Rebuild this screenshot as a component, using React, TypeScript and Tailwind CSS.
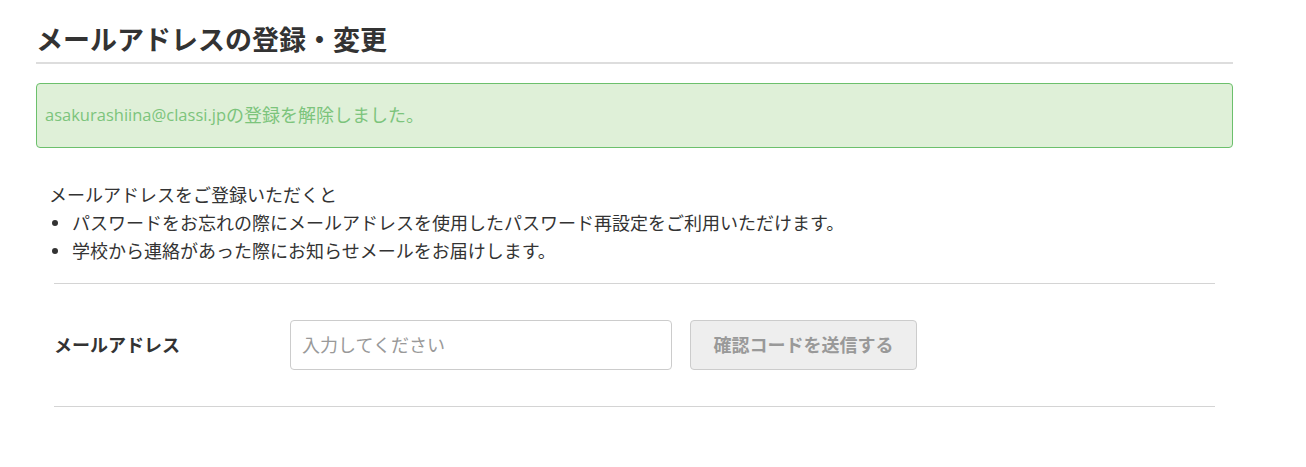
export default function App() {
  const font = { fontFamily: '"Open Sans", "Noto Sans CJK JP", sans-serif' };
  const Bullet = () => (
    <span className="w-[23px] shrink-0 flex items-center pl-[3px]">
      <span className="block w-[6px] h-[6px] rounded-full bg-[#333]" />
    </span>
  );
  return (
    <div className="bg-white w-[1306px] h-[467px] text-[#333]" style={font}>
      <div className="ml-[36px] w-[1197px] pt-[22px]">
        <h1 className="text-[27px] font-bold leading-[36px] text-[#333] pb-[4px] border-b-2 border-[#ddd]">
          メールアドレスの登録・変更
        </h1>
        <div className="mt-[19px] h-[65px] flex items-center px-[8px] bg-[#dff0d8] border border-[#6cc06c] rounded-[4px] text-[18px] text-[#7cc47c]">
          <span className="text-[16.5px]">asakurashiina@classi.jp</span>の登録を解除しました。
        </div>
        <div className="mt-[33px] pl-[13px] text-[18px] leading-[28px] text-[#333]">
          <p>メールアドレスをご登録いただくと</p>
          <ul>
            <li className="flex">
              <Bullet />
              <span>パスワードをお忘れの際にメールアドレスを使用したパスワード再設定をご利用いただけます。</span>
            </li>
            <li className="flex">
              <Bullet />
              <span>学校から連絡があった際にお知らせメールをお届けします。</span>
            </li>
          </ul>
        </div>
        <div className="ml-[18px] w-[1161px] mt-[18px] border-t border-[#d4d4d4]">
          <div className="flex items-center h-[122px]">
            <div className="w-[236px] text-[18px] font-bold text-[#333]">メールアドレス</div>
            <input
              className="w-[382px] h-[50px] border border-[#ccc] rounded-[4px] pl-[11px] pr-[12px] text-[18px] text-[#333] placeholder:text-[#999] outline-none"
              style={font}
              placeholder="入力してください"
            />
            <button
              className="ml-[18px] w-[227px] h-[50px] bg-[#eee] border border-[#ccc] rounded-[4px] text-[18px] font-bold text-[#999]"
              style={font}
            >
              確認コードを送信する
            </button>
          </div>
          <div className="border-t border-[#d4d4d4]" />
        </div>
      </div>
    </div>
  );
}
